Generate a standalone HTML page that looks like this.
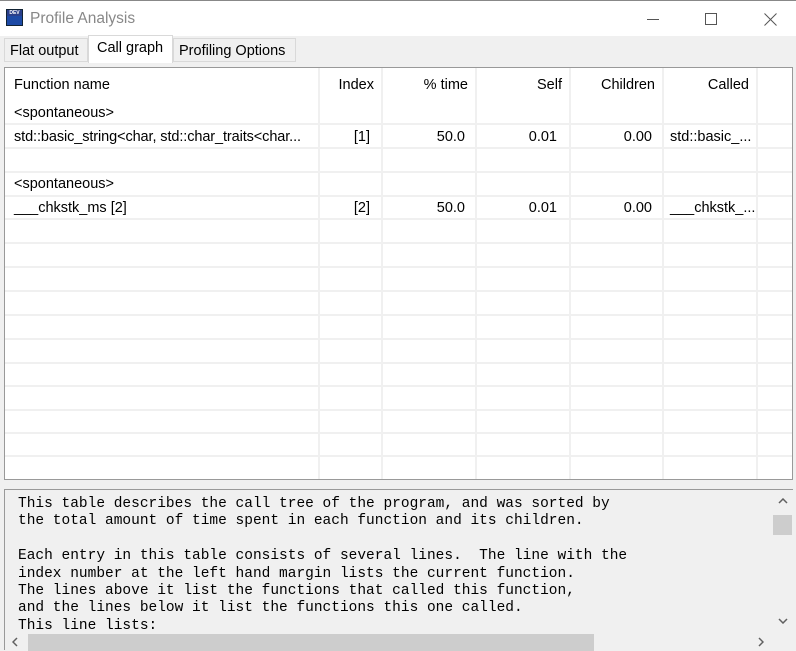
<!DOCTYPE html>
<html><head><style>
*{margin:0;padding:0;box-sizing:border-box}
body{width:796px;height:650px;background:#f0f0f0;font-family:"Liberation Sans",sans-serif;font-size:14.5px;color:#000;position:relative;overflow:hidden}
.abs{position:absolute}
.title{left:0;top:0;width:796px;height:36px;background:#fff;border-top:1px solid #888}
.tab{top:38px;height:24px;border:1px solid #d9d9d9;background:#f0f0f0;padding:4px 5px 0 5px;font-size:14.5px}
.table{left:4px;top:67px;width:789px;height:413px;background:#fff;border:1px solid #999;overflow:hidden}
.hl{position:absolute;left:0;width:789px;height:2px;background:#f0f0f0}
.vl{position:absolute;top:0;width:2px;background:#f0f0f0}
.t{position:absolute;white-space:nowrap}
.r{text-align:right}
.memo{left:4px;top:489px;width:789px;height:161px;border:1px solid #999;background:#f0f0f0}
pre{font-family:"Liberation Mono",monospace;font-size:14.5px;line-height:17.4px;position:absolute;left:13px;top:6px;color:#000}
</style></head><body>
<div class="abs title">
 <div class="abs" style="left:6px;top:8px;width:17px;height:17px;background:#1d4aa6;border:1px solid #123"></div>
 <div class="abs" style="left:7px;top:9px;width:15px;height:6px;background:#2a3f8a;color:#fff;font-size:5px;line-height:6px;text-align:center;font-weight:bold">DEV</div>
 <div class="abs" style="left:30px;top:9px;font-size:15.5px;color:#888">Profile Analysis</div>
 <div class="abs" style="left:647px;top:18px;width:12px;height:1px;background:#555"></div>
 <div class="abs" style="left:705px;top:12px;width:12px;height:12px;border:1px solid #555"></div>
 <svg class="abs" style="left:764px;top:12px" width="13" height="13"><path d="M0.5 0.5L12.5 12.5M12.5 0.5L0.5 12.5" stroke="#555" stroke-width="1"/></svg>
</div>
<div class="abs tab" style="left:4px;width:84px">Flat output</div>
<div class="abs tab" style="left:88px;top:35px;height:28px;width:85px;background:#fff;border-bottom:none;padding-left:8px">Call graph</div>
<div class="abs tab" style="left:173px;width:123px">Profiling Options</div>
<div class="abs table">
 <div class="vl" style="left:313px;height:413px"></div>
 <div class="vl" style="left:376px;height:413px"></div>
 <div class="vl" style="left:470px;height:413px"></div>
 <div class="vl" style="left:564px;height:413px"></div>
 <div class="vl" style="left:657px;height:413px"></div>
 <div class="vl" style="left:751px;height:413px"></div>
 <div class="hl" style="top:55px"></div><div class="hl" style="top:79px"></div><div class="hl" style="top:103px"></div><div class="hl" style="top:127px"></div><div class="hl" style="top:150px"></div><div class="hl" style="top:174px"></div><div class="hl" style="top:198px"></div><div class="hl" style="top:222px"></div><div class="hl" style="top:246px"></div><div class="hl" style="top:270px"></div><div class="hl" style="top:294px"></div><div class="hl" style="top:317px"></div><div class="hl" style="top:341px"></div><div class="hl" style="top:364px"></div><div class="hl" style="top:387px"></div>
 <div class="t" style="left:9px;top:9px">Function name</div>
 <div class="t r" style="left:315px;width:54px;top:9px">Index</div>
 <div class="t r" style="left:378px;width:85px;top:9px">% time</div>
 <div class="t r" style="left:472px;width:85px;top:9px">Self</div>
 <div class="t r" style="left:566px;width:84px;top:9px">Children</div>
 <div class="t r" style="left:659px;width:85px;top:9px">Called</div>
 <div class="t" style="left:9px;top:37px">&lt;spontaneous&gt;</div>
 <div class="t" style="left:9px;top:61px;letter-spacing:-0.1px">std::basic_string&lt;char, std::char_traits&lt;char...</div>
 <div class="t r" style="left:315px;width:50px;top:61px">[1]</div>
 <div class="t r" style="left:378px;width:82px;top:61px">50.0</div>
 <div class="t r" style="left:472px;width:80px;top:61px">0.01</div>
 <div class="t r" style="left:566px;width:81px;top:61px">0.00</div>
 <div class="t" style="left:665px;top:61px">std::basic_...</div>
 <div class="t" style="left:9px;top:108px">&lt;spontaneous&gt;</div>
 <div class="t" style="left:9px;top:132px">___chkstk_ms [2]</div>
 <div class="t r" style="left:315px;width:50px;top:132px">[2]</div>
 <div class="t r" style="left:378px;width:82px;top:132px">50.0</div>
 <div class="t r" style="left:472px;width:80px;top:132px">0.01</div>
 <div class="t r" style="left:566px;width:81px;top:132px">0.00</div>
 <div class="t" style="left:665px;top:132px">___chkstk_...</div>
</div>
<div class="abs memo">
<pre>This table describes the call tree of the program, and was sorted by
the total amount of time spent in each function and its children.

Each entry in this table consists of several lines.  The line with the
index number at the left hand margin lists the current function.
The lines above it list the functions that called this function,
and the lines below it list the functions this one called.
This line lists:</pre>
 <div class="abs" style="left:767px;top:0;width:21px;height:143px;background:#f0f0f0"></div>
 <svg class="abs" style="left:773px;top:8px" width="10" height="6"><path d="M1 5L5 1L9 5" stroke="#606060" fill="none" stroke-width="1.5"/></svg>
 <div class="abs" style="left:768px;top:25px;width:19px;height:20px;background:#cdcdcd"></div>
 <svg class="abs" style="left:773px;top:128px" width="10" height="6"><path d="M1 1L5 5L9 1" stroke="#606060" fill="none" stroke-width="1.5"/></svg>
 <div class="abs" style="left:0;top:143px;width:788px;height:18px;background:#f0f0f0"></div>
 <svg class="abs" style="left:7px;top:147px" width="6" height="10"><path d="M5 1L1 5L5 9" stroke="#606060" fill="none" stroke-width="1.5"/></svg>
 <div class="abs" style="left:23px;top:144px;width:566px;height:17px;background:#cdcdcd"></div>
 <svg class="abs" style="left:753px;top:147px" width="6" height="10"><path d="M1 1L5 5L1 9" stroke="#606060" fill="none" stroke-width="1.5"/></svg>
</div>
</body></html>
